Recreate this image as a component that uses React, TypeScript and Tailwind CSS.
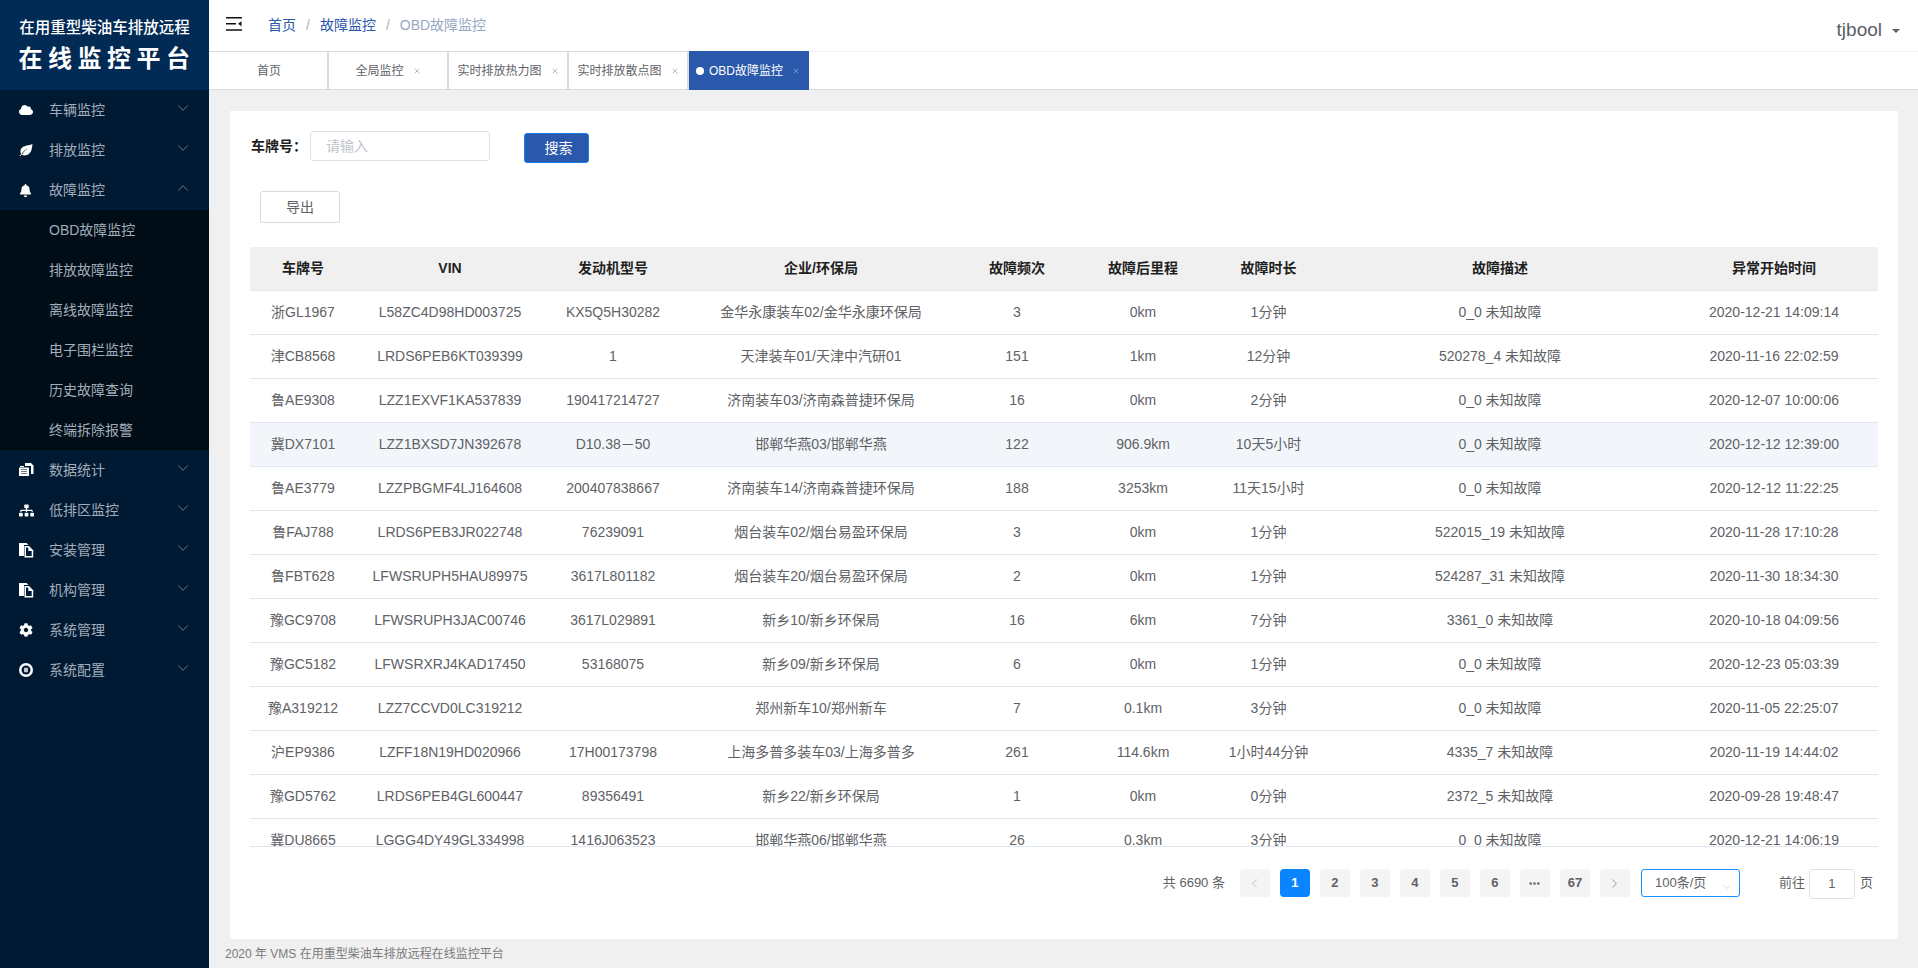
import { ChevronDown, ChevronUp, ChevronLeft, ChevronRight, MoreHorizontal, X } from "lucide-react";
import { FaCloud, FaBell, FaSitemap, FaCog } from "react-icons/fa";

// files-o style glyph used by 安装管理 / 机构管理
const FilesIcon = () => (
  <svg width="15" height="15" viewBox="0 0 15 15">
    <path d="M0 0h7.5l2 2H5v11H0z" fill="#fff" />
    <path d="M5.5 3h4.5l4.2 4.2v7.3H5.5z" fill="#fff" />
    <path d="M7 4.5h2.3v3.6h3.4v5H7z" fill="#001a33" />
  </svg>
);

const StatsIcon = () => (
  <svg width="15" height="15" viewBox="0 0 15 15">
    <path d="M6 0h6l2.5 2.5V11H12V3H6z" fill="#fff" />
    <path d="M1 3h4v1H1zM0 4.5h10V13H0z" fill="#fff" />
    <path d="M2 6h6v1H2zM2 8h6v1H2zM2 10h6v1H2z" fill="#6f7d8c" />
  </svg>
);

const RingIcon = () => (
  <svg width="14" height="14" viewBox="0 0 14 14">
    <circle cx="7" cy="7" r="7" fill="#fff" />
    <circle cx="7" cy="7" r="4.5" fill="#001a33" />
    <rect x="5" y="4.8" width="4" height="4.4" rx="0.6" fill="#c3cad2" />
  </svg>
);

const LeafIcon = () => (
  <svg width="14" height="14" viewBox="0 0 14 14">
    <path
      d="M13.5 1C8 3 2.5 2.5 1.5 7.5c-.3 1.6.2 3 1 3.8C3.5 9 6 6.5 9 5.5 6.5 7 4 9.5 3 11.8c3 1.5 8 .5 9.5-5 .5-2 .8-4 1-5.8z"
      fill="#fff"
    />
    <path d="M.8 13l2-2" stroke="#fff" strokeWidth="1" />
  </svg>
);

const menusTop = [
  { label: "车辆监控", icon: <FaCloud size={14} /> },
  { label: "排放监控", icon: <LeafIcon /> },
];
const subMenus = ["OBD故障监控", "排放故障监控", "离线故障监控", "电子围栏监控", "历史故障查询", "终端拆除报警"];
const menusBottom = [
  { label: "数据统计", icon: <StatsIcon /> },
  { label: "低排区监控", icon: <FaSitemap size={15} /> },
  { label: "安装管理", icon: <FilesIcon /> },
  { label: "机构管理", icon: <FilesIcon /> },
  { label: "系统管理", icon: <FaCog size={14} /> },
  { label: "系统配置", icon: <RingIcon /> },
];

const tabs = ["全局监控", "实时排放热力图", "实时排放散点图"];

const columns = [
  { title: "车牌号", w: "w-[106px]", pad: "" },
  { title: "VIN", w: "w-[188px]", pad: "" },
  { title: "发动机型号", w: "w-[138px]", pad: "" },
  { title: "企业/环保局", w: "w-[270px]", pad: "pl-[8px]" },
  { title: "故障频次", w: "w-[128px]", pad: "pl-[2px]" },
  { title: "故障后里程", w: "w-[124px]", pad: "pl-[2px]" },
  { title: "故障时长", w: "w-[126px]", pad: "pl-[3px]" },
  { title: "故障描述", w: "w-[340px]", pad: "" },
  { title: "异常开始时间", w: "w-[208px]", pad: "" },
];

const rows = [
  ["浙GL1967", "L58ZC4D98HD003725", "KX5Q5H30282", "金华永康装车02/金华永康环保局", "3", "0km", "1分钟", "0_0 未知故障", "2020-12-21 14:09:14"],
  ["津CB8568", "LRDS6PEB6KT039399", "1", "天津装车01/天津中汽研01", "151", "1km", "12分钟", "520278_4 未知故障", "2020-11-16 22:02:59"],
  ["鲁AE9308", "LZZ1EXVF1KA537839", "190417214727", "济南装车03/济南森普捷环保局", "16", "0km", "2分钟", "0_0 未知故障", "2020-12-07 10:00:06"],
  ["冀DX7101", "LZZ1BXSD7JN392678", "D10.38－50", "邯郸华燕03/邯郸华燕", "122", "906.9km", "10天5小时", "0_0 未知故障", "2020-12-12 12:39:00"],
  ["鲁AE3779", "LZZPBGMF4LJ164608", "200407838667", "济南装车14/济南森普捷环保局", "188", "3253km", "11天15小时", "0_0 未知故障", "2020-12-12 11:22:25"],
  ["鲁FAJ788", "LRDS6PEB3JR022748", "76239091", "烟台装车02/烟台易盈环保局", "3", "0km", "1分钟", "522015_19 未知故障", "2020-11-28 17:10:28"],
  ["鲁FBT628", "LFWSRUPH5HAU89975", "3617L801182", "烟台装车20/烟台易盈环保局", "2", "0km", "1分钟", "524287_31 未知故障", "2020-11-30 18:34:30"],
  ["豫GC9708", "LFWSRUPH3JAC00746", "3617L029891", "新乡10/新乡环保局", "16", "6km", "7分钟", "3361_0 未知故障", "2020-10-18 04:09:56"],
  ["豫GC5182", "LFWSRXRJ4KAD17450", "53168075", "新乡09/新乡环保局", "6", "0km", "1分钟", "0_0 未知故障", "2020-12-23 05:03:39"],
  ["豫A319212", "LZZ7CCVD0LC319212", "", "郑州新车10/郑州新车", "7", "0.1km", "3分钟", "0_0 未知故障", "2020-11-05 22:25:07"],
  ["沪EP9386", "LZFF18N19HD020966", "17H00173798", "上海多普多装车03/上海多普多", "261", "114.6km", "1小时44分钟", "4335_7 未知故障", "2020-11-19 14:44:02"],
  ["豫GD5762", "LRDS6PEB4GL600447", "89356491", "新乡22/新乡环保局", "1", "0km", "0分钟", "2372_5 未知故障", "2020-09-28 19:48:47"],
  ["冀DU8665", "LGGG4DY49GL334998", "1416J063523", "邯郸华燕06/邯郸华燕", "26", "0.3km", "3分钟", "0_0 未知故障", "2020-12-21 14:06:19"],
];

const MenuItem = ({ label, icon, open }: { label: string; icon: React.ReactNode; open?: boolean }) => (
  <div className="flex h-10 items-center pl-[19px] pr-[17px] text-sm text-[#a3adba]">
    <span className="flex w-[30px] shrink-0 items-center text-white">{icon}</span>
    <span className="flex-1">{label}</span>
    {open ? (
      <ChevronUp size={18} strokeWidth={1} className="mb-1 text-[#8e99a8]" />
    ) : (
      <ChevronDown size={18} strokeWidth={1} className="mb-1 text-[#8e99a8]" />
    )}
  </div>
);

const Sidebar = () => (
  <aside className="flex h-full w-[209px] shrink-0 flex-col bg-[#001a33]">
    <div className="flex h-[90px] flex-col items-center bg-[#012a55] pt-[18px] font-medium text-white">
      <div className="text-[15.5px] leading-[20px]">在用重型柴油车排放远程</div>
      <div className="mt-[5px] pl-[5px] text-[24px] font-bold leading-[32px] tracking-[5.5px]">在线监控平台</div>
    </div>
    {menusTop.map((m) => (
      <MenuItem key={m.label} {...m} />
    ))}
    <MenuItem label="故障监控" icon={<FaBell size={13} />} open />
    <div className="bg-[#000d17]">
      {subMenus.map((s) => (
        <div key={s} className="flex h-10 items-center pl-[49px] text-sm text-[#a3adba]">
          {s}
        </div>
      ))}
    </div>
    {menusBottom.map((m) => (
      <MenuItem key={m.label} {...m} />
    ))}
  </aside>
);

const Navbar = () => (
  <header className="flex h-[51px] shrink-0 items-center pl-[17px] pr-[18px]">
    <svg width="16" height="14" viewBox="0 0 16 14" className="mb-1">
      <path d="M0 0h16v1.6H0zM0 6h10v1.6H0zM0 12.2h16v1.6H0z" fill="#111" />
      <path d="M15.5 4.2v5l-3.5-2.5z" fill="#111" />
    </svg>
    <nav className="mb-[2px] ml-[26px] flex items-center text-sm text-[#2a58ab]">
      <span>首页</span>
      <span className="mx-[10px] text-[#a8b3c7]">/</span>
      <span>故障监控</span>
      <span className="mx-[10px] text-[#a8b3c7]">/</span>
      <span className="text-[#97a8c6]">OBD故障监控</span>
    </nav>
    <div className="ml-auto mt-[9px] flex items-center text-[19px] text-[#5a5e66]">
      tjbool
      <span className="ml-[10px] mt-[2px] h-0 w-0 border-x-[4px] border-t-[4px] border-x-transparent border-t-[#5a5e66]" />
    </div>
  </header>
);

const TabsBar = () => (
  <div className="flex h-[39px] shrink-0 border-b border-[#d8dce5] text-xs text-[#5f6368]">
    <div className="flex w-[120px] items-center justify-center border-r-2 border-t border-[#d8dce5] pl-[2px]">首页</div>
    {tabs.map((t) => (
      <div key={t} className="flex w-[120px] items-center justify-center gap-[9px] border-r-2 border-t border-[#d8dce5]">
        {t}
        <X size={8} strokeWidth={1.5} className="text-[#777]" />
      </div>
    ))}
    <div className="-mb-px flex w-[120px] items-center justify-center bg-[#2a58ab] pr-[2px] text-white">
      <span className="mr-[5px] h-2 w-2 rounded-full bg-white" />
      OBD故障监控
      <X size={8} strokeWidth={1.5} className="ml-[9px] text-[#c7d3ea]" />
    </div>
    <div className="flex-1 border-t border-[#f0f1f3]" />
  </div>
);

const PageBtn = ({ children, active }: { children: React.ReactNode; active?: boolean }) => (
  <div
    className={`flex h-7 w-[30px] items-center justify-center rounded-sm text-[13px] font-bold ${
      active ? "bg-[#0a84ff] text-white" : "bg-[#f4f4f5] text-[#606266]"
    }`}
  >
    {children}
  </div>
);

const Pagination = () => (
  <div className="mt-[22px] flex items-start pr-[5px] text-[13px] text-[#606266]">
    <span className="ml-auto mr-[15px] h-7 leading-7">共 6690 条</span>
    <div className="flex gap-[10px]">
      <PageBtn>
        <ChevronLeft size={15} strokeWidth={1} className="text-[#a8abb2]" />
      </PageBtn>
      <PageBtn active>1</PageBtn>
      <PageBtn>2</PageBtn>
      <PageBtn>3</PageBtn>
      <PageBtn>4</PageBtn>
      <PageBtn>5</PageBtn>
      <PageBtn>6</PageBtn>
      <PageBtn>
        <MoreHorizontal size={13} strokeWidth={3} />
      </PageBtn>
      <PageBtn>67</PageBtn>
      <PageBtn>
        <ChevronRight size={15} strokeWidth={1} />
      </PageBtn>
    </div>
    <div className="ml-[11px] flex h-7 w-[99px] items-center rounded-[3px] border border-[#1890ff] pl-[13px]">
      100条/页
      <ChevronDown size={12} strokeWidth={1} className="ml-auto mr-[6px] mt-[8px] text-[#a8abb2]" />
    </div>
    <span className="ml-[39px] h-7 leading-7">前往</span>
    <div className="ml-[4px] flex h-[30px] w-[46px] items-center justify-center rounded-[3px] border border-[#dcdfe6]">1</div>
    <span className="ml-[5px] h-7 leading-7">页</span>
  </div>
);

const DataTable = () => (
  <div className="mt-[24px] h-[600px] overflow-hidden border-b border-[#e0e7f1]">
    <table className="w-full table-fixed border-collapse text-center text-sm">
      <colgroup>
        {columns.map((c) => (
          <col key={c.title} className={c.w} />
        ))}
      </colgroup>
      <thead>
        <tr className="h-[43px] border-b border-[#e0e7f1] bg-[#f0f0f0]">
          {columns.map((c) => (
            <th key={c.title} className={`p-0 font-bold text-[#1f1f1f] ${c.pad}`}>
              {c.title}
            </th>
          ))}
        </tr>
      </thead>
      <tbody>
        {rows.map((row, i) => (
          <tr key={row[1]} className={`h-[44px] border-b border-[#e0e7f1] text-[#606266] ${i === 3 ? "bg-[#f2f6fa]" : ""}`}>
            {row.map((cell, j) => (
              <td key={j} className={`whitespace-nowrap p-0 ${columns[j].pad}`}>
                {cell}
              </td>
            ))}
          </tr>
        ))}
      </tbody>
    </table>
  </div>
);

const Content = () => (
  <main className="flex min-h-0 flex-1 flex-col bg-[#f0f0f0] pl-[21px] pr-[20px] pt-[21px]">
    <div className="h-[828px] bg-white px-[20px] pt-[20px]">
      <div className="flex items-start">
        <label className="h-[30px] w-[60px] pl-[1px] text-sm font-bold leading-[30px] text-[#1f1f1f]">车牌号：</label>
        <input
          placeholder="请输入"
          className="h-[30px] w-[180px] rounded-[3px] border border-[#dcdfe6] pl-[15px] text-sm outline-none placeholder:text-[#c0c4cc]"
        />
        <button className="ml-[34px] mt-[2px] h-[30px] w-[65px] rounded-[3px] border border-[#1a7fe8] bg-[#2a58ab] pl-[4px] text-sm text-white">
          搜索
        </button>
      </div>
      <button className="ml-[10px] mt-[28px] block h-8 w-20 rounded-[3px] border border-[#d5d9e2] text-sm text-[#606266]">
        导出
      </button>
      <DataTable />
      <Pagination />
    </div>
    <footer className="-ml-[5px] flex h-[29px] items-center text-xs text-[#7a7a7a]">
      2020 年 VMS 在用重型柴油车排放远程在线监控平台
    </footer>
  </main>
);

export default function App() {
  return (
    <div className="flex h-[968px] w-full overflow-hidden bg-white font-['Liberation_Sans','Noto_Sans_CJK_SC',sans-serif]">
      <Sidebar />
      <div className="flex min-w-0 flex-1 flex-col">
        <Navbar />
        <TabsBar />
        <Content />
      </div>
    </div>
  );
}
